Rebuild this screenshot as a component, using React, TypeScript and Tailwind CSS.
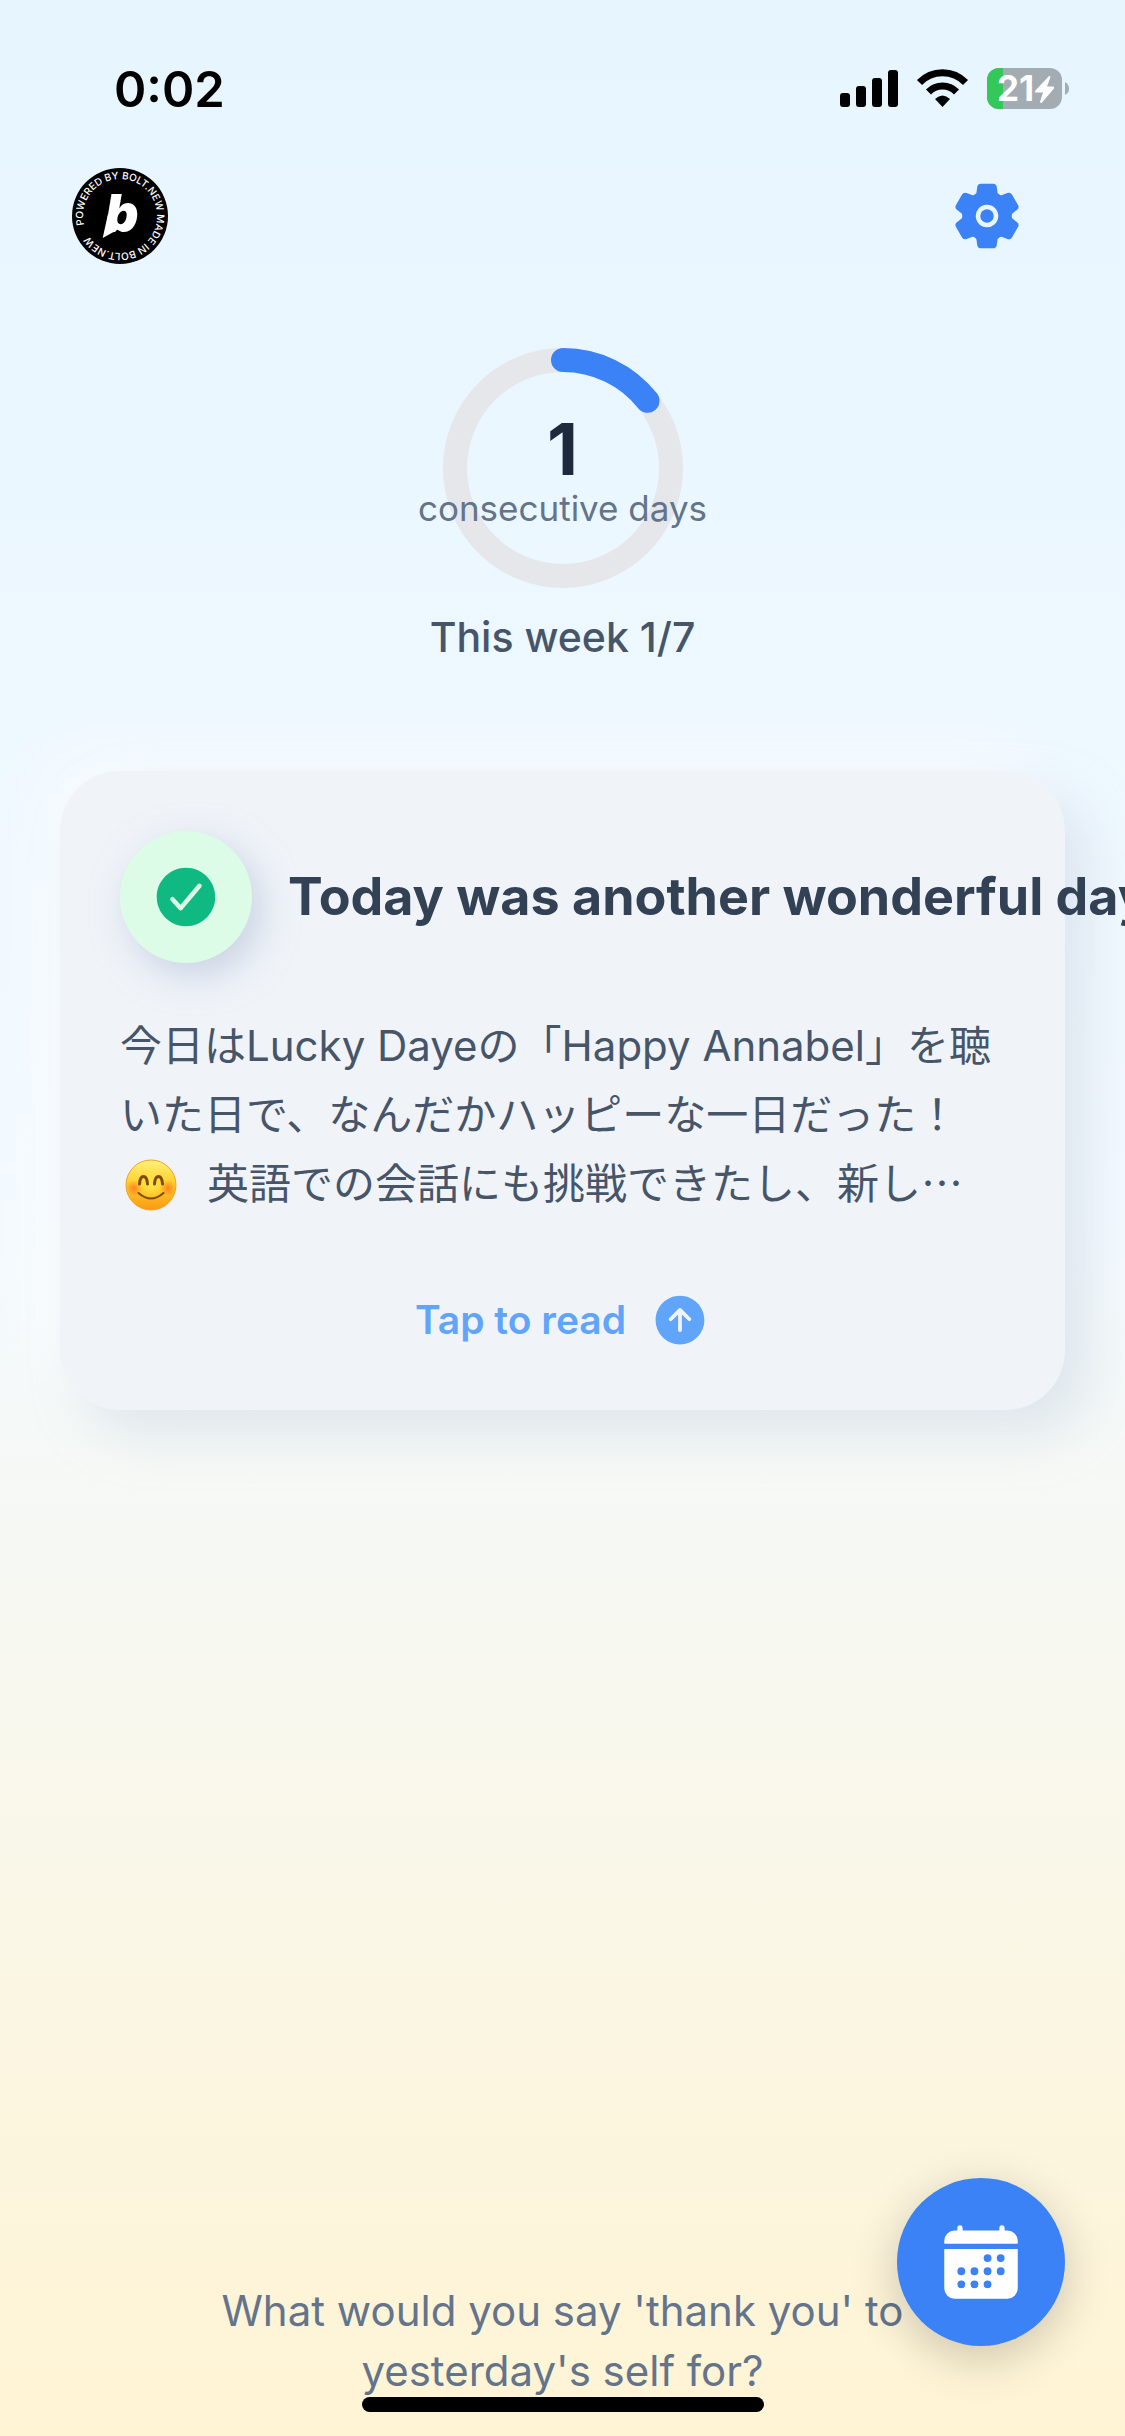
import { useState } from "react";
import {
  IoArrowUpCircle,
  IoCalendar,
  IoCheckmarkCircle,
  IoSettings,
} from "react-icons/io5";

const RING_RADIUS = 108;
const RING_LENGTH = 2 * Math.PI * RING_RADIUS;

function StatusBar() {
  return (
    <div className="flex h-[150px] items-center justify-between pt-[28px] pr-[56px] pl-[114px]">
      <span className="text-[49px] leading-none font-semibold text-black">0:02</span>
      <svg width="230" height="42" viewBox="0 0 230 42" role="img" aria-label="Signal, Wi-Fi, battery 21%">
        {/* signal */}
        <g fill="#000">
          <rect x="1" y="25" width="10" height="14" rx="3" />
          <rect x="17" y="18" width="10" height="21" rx="3" />
          <rect x="33" y="10" width="10" height="29" rx="3" />
          <rect x="49" y="2" width="10" height="37" rx="3" />
        </g>
        {/* wifi */}
        <g fill="none" stroke="#000" strokeWidth="7">
          <path d="M80.500 14.500 A 32 32 0 0 1 126.500 14.500" />
          <path d="M89.500 24 A 19.500 19.500 0 0 1 117.500 24" />
        </g>
        <path d="M103.500 39 L96 31 Q103.500 24 111 31 Z" fill="#000" />
        {/* battery */}
        <clipPath id="battery">
          <rect x="148" y="0" width="75" height="41" rx="12" />
        </clipPath>
        <g clipPath="url(#battery)">
          <rect x="148" y="0" width="75" height="41" fill="#a4acb3" />
          <rect x="148" y="0" width="16" height="41" fill="#34c759" />
        </g>
        <path d="M226 14 Q230 16 230 20.500 Q230 25 226 27 Z" fill="#a4acb3" />
        <text x="158" y="33" fontSize="35" fontWeight="700" fill="#fff">21</text>
        <path d="M210 8 L196 23 Q195.500 24.500 197 24.500 H204 L201 34 Q202 35.500 203 34.500 L215 20.500 Q215.500 18.500 214 18.500 H208 L211.500 9 Q211 7.500 210 8 Z" fill="#fff" />
      </svg>
    </div>
  );
}

function BoltBadge() {
  return (
    <svg className="size-24" viewBox="0 0 96 96">
      <circle cx="48" cy="48" r="48" fill="#000" />
      <path id="badge-ring" d="M12.100 57 A37 37 0 0 1 83.900 39 A37 37 0 0 1 12.100 57" fill="none" />
      <text fontSize="10" fontWeight="500" fill="#fff">
        <textPath href="#badge-ring">POWERED BY BOLT.NEW MADE IN BOLT.NEW</textPath>
      </text>
      <text x="33" y="64" fontSize="52" fontWeight="900" fontStyle="italic" fill="#fff">b</text>
      <path d="M36 46 L30.700 70 L47 61 Z" fill="#fff" />
    </svg>
  );
}

function SmilingFace() {
  return (
    <svg className="mr-[30px] ml-[5px] inline-block size-[52px] align-[-12px]" viewBox="0 0 52 52" role="img" aria-label="😊">
      <defs>
        <linearGradient id="face" x1="0" y1="0" x2="0" y2="1">
          <stop offset="0" stopColor="#fff27a" />
          <stop offset="0.450" stopColor="#ffd02e" />
          <stop offset="1" stopColor="#fb9a12" />
        </linearGradient>
        <radialGradient id="glow">
          <stop offset="0" stopColor="#ffe94a" stopOpacity="0.900" />
          <stop offset="1" stopColor="#ffe94a" stopOpacity="0" />
        </radialGradient>
        <radialGradient id="cheek">
          <stop offset="0" stopColor="#ff6a1f" stopOpacity="0.700" />
          <stop offset="1" stopColor="#ff6a1f" stopOpacity="0" />
        </radialGradient>
      </defs>
      <circle cx="26" cy="26" r="25" fill="url(#face)" stroke="#f5a21b" />
      <circle cx="26" cy="26" r="16" fill="url(#glow)" />
      <circle cx="9" cy="29" r="8" fill="url(#cheek)" />
      <circle cx="43" cy="29" r="8" fill="url(#cheek)" />
      <path d="M14.500 25 Q15 17.500 18.500 17.500 Q22 17.500 22.500 25 M29.500 25 Q30 17.500 33.500 17.500 Q37 17.500 37.500 25" fill="none" stroke="#7d4a08" strokeWidth="3" strokeLinecap="round" />
      <path d="M13.500 34 Q26 45 38.500 34" fill="none" stroke="#7d4a08" strokeWidth="2" strokeLinecap="round" />
    </svg>
  );
}

function WeekProgress({ streak, done, total }: { streak: number; done: number; total: number }) {
  return (
    <section className="flex flex-col items-center pt-[66px]">
      <div className="relative size-60">
        <svg className="size-full -rotate-90" viewBox="0 0 240 240">
          <circle cx="120" cy="120" r={RING_RADIUS} fill="none" stroke="#e5e7eb" strokeWidth="24" />
          <circle
            cx="120"
            cy="120"
            r={RING_RADIUS}
            fill="none"
            stroke="#3b82f6"
            strokeWidth="24"
            strokeLinecap="round"
            strokeDasharray={`${(RING_LENGTH * done) / total} ${RING_LENGTH}`}
          />
        </svg>
        <div className="absolute inset-0 flex flex-col items-center justify-center pt-2 whitespace-nowrap">
          <span className="text-[72px] leading-[72px] font-bold text-[#1e293b]">{streak}</span>
          <span className="text-[35px] leading-[46px] text-[#64748b]">consecutive days</span>
        </div>
      </div>
      <p className="mt-6 text-[41px] leading-[51px] font-medium text-[#475569]">
        This week {done}/{total}
      </p>
    </section>
  );
}

function DiaryCard({ onOpen }: { onOpen: () => void }) {
  return (
    <article className="mx-[60px] mt-[108px] rounded-[60px] bg-[#f0f4f9] p-[60px] shadow-[24px_24px_48px_rgba(203,213,225,0.5),-24px_-24px_60px_rgba(255,255,255,0.6)]">
      <div className="flex items-center gap-9">
        <div className="flex size-[132px] shrink-0 items-center justify-center rounded-full bg-[#dcfce7] shadow-[9px_12px_36px_rgba(163,177,205,0.5)]">
          <IoCheckmarkCircle className="size-[72px] text-[#10b981]" />
        </div>
        <h1 className="text-[52px] leading-[66px] font-bold whitespace-nowrap text-[#334155]">
          Today was another wonderful day
        </h1>
      </div>
      <p lang="ja" className="mt-12 text-[42px] leading-[69px] whitespace-nowrap text-[#475569]">
        今日はLucky Dayeの「Happy Annabel」を聴
        <br />
        いた日で、なんだかハッピーな一日だった！
        <br />
        <SmilingFace />
        英語での会話にも挑戦できたし、新し
        <span className="font-['Noto_Sans_CJK_JP',sans-serif] leading-none">…</span>
      </p>
      <button
        type="button"
        onClick={onOpen}
        className="mx-auto mt-[72px] flex items-center gap-6 text-[39px] leading-[60px] font-semibold text-[#60a5fa]"
      >
        Tap to read
        <IoArrowUpCircle className="size-[60px]" />
      </button>
    </article>
  );
}

export default function App() {
  const [, setOpened] = useState(false);

  return (
    <div className="relative flex min-h-screen flex-col overflow-hidden bg-linear-to-b/srgb from-[#e6f5ff] via-[#f3faff] to-[#fff4d4] font-['Inter','Noto_Sans_CJK_JP',sans-serif]">
      <StatusBar />

      <header className="flex h-[132px] items-center justify-between px-[72px]">
        <a href="#bolt" aria-label="Powered by Bolt.new">
          <BoltBadge />
        </a>
        <button type="button" aria-label="Settings" className="flex size-[132px] items-center justify-center">
          <IoSettings className="size-[72px] text-[#3b82f6]" />
        </button>
      </header>

      <main className="flex-1">
        <WeekProgress streak={1} done={1} total={7} />
        <DiaryCard onOpen={() => setOpened(true)} />
      </main>

      <footer className="flex flex-col items-center pb-6">
        <p className="-mb-1 text-center text-[42px] leading-[60px] text-[#64748b]">
          What would you say 'thank you' to
          <br />
          yesterday's self for?
        </p>
        <div className="h-[15px] w-[402px] rounded-full bg-black" />
      </footer>

      <button
        type="button"
        aria-label="Calendar"
        className="absolute right-[60px] bottom-[90px] flex size-[168px] items-center justify-center rounded-full bg-[#3b82f6] shadow-[0_12px_48px_rgba(0,0,0,0.2)]"
      >
        <IoCalendar className="size-[84px] text-white" />
      </button>
    </div>
  );
}
